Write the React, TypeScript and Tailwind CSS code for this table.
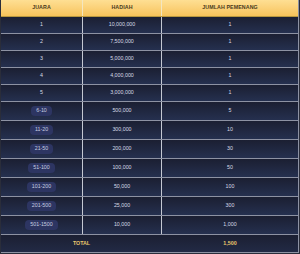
import React from 'react';

const rows = [
  { rank: '1', prize: '10,000,000', winners: '1' },
  { rank: '2', prize: '7,500,000', winners: '1' },
  { rank: '3', prize: '5,000,000', winners: '1' },
  { rank: '4', prize: '4,000,000', winners: '1' },
  { rank: '5', prize: '3,000,000', winners: '1' },
  { rank: '6-10', prize: '500,000', winners: '5', badge: true },
  { rank: '11-20', prize: '300,000', winners: '10', badge: true },
  { rank: '21-50', prize: '200,000', winners: '30', badge: true },
  { rank: '51-100', prize: '100,000', winners: '50', badge: true },
  { rank: '101-200', prize: '50,000', winners: '100', badge: true },
  { rank: '201-500', prize: '25,000', winners: '300', badge: true },
  { rank: '501-1500', prize: '10,000', winners: '1,000', badge: true },
];

const grid = 'grid grid-cols-[82px_79px_1fr]';

export default function App() {
  return (
    <div
      className="w-[300px] h-[254px] bg-[#2a2d3a] overflow-hidden"
      style={{ fontFamily: '"Liberation Sans", Arial, sans-serif' }}
    >
      <div className="ml-[1px] w-[298px] border-r border-b border-[#8d92a3]">
        <div className={`${grid} h-[17px] bg-gradient-to-b from-[#fedf93] to-[#f7c35a] border-b border-[#b8973f] text-[5.3px] font-bold text-[#4a3a1c] tracking-[0.1px]`}>
          <div className="flex items-center justify-center border-r border-[#f3e6c0]">JUARA</div>
          <div className="flex items-center justify-center border-r border-[#f3e6c0]">HADIAH</div>
          <div className="flex items-center justify-center">JUMLAH PEMENANG</div>
        </div>
        {rows.map((r) => (
          <div
            key={r.rank}
            className={`${grid} ${r.badge ? 'h-[19px]' : 'h-[17px]'} bg-gradient-to-b from-[#1b1f32] to-[#25304f] border-b border-[#8d92a3] text-[5.3px] text-[#d7dbe6]`}
          >
            <div className="flex items-center justify-center border-r border-[#c4c8d2]">
              {r.badge ? (
                <span className="px-[5px] h-[10px] flex items-center rounded-[4px] bg-[#2d3562] text-[#c9cee0]">{r.rank}</span>
              ) : (
                r.rank
              )}
            </div>
            <div className="flex items-center justify-center border-r border-[#c4c8d2]">{r.prize}</div>
            <div className="flex items-center justify-center">{r.winners}</div>
          </div>
        ))}
        <div className="grid grid-cols-[161px_1fr] h-[17px] bg-gradient-to-b from-[#1b1f32] to-[#222a45] text-[5.3px] font-bold text-[#e9c66c]">
          <div className="flex items-center justify-center">TOTAL</div>
          <div className="flex items-center justify-center">1,500</div>
        </div>
      </div>
    </div>
  );
}
